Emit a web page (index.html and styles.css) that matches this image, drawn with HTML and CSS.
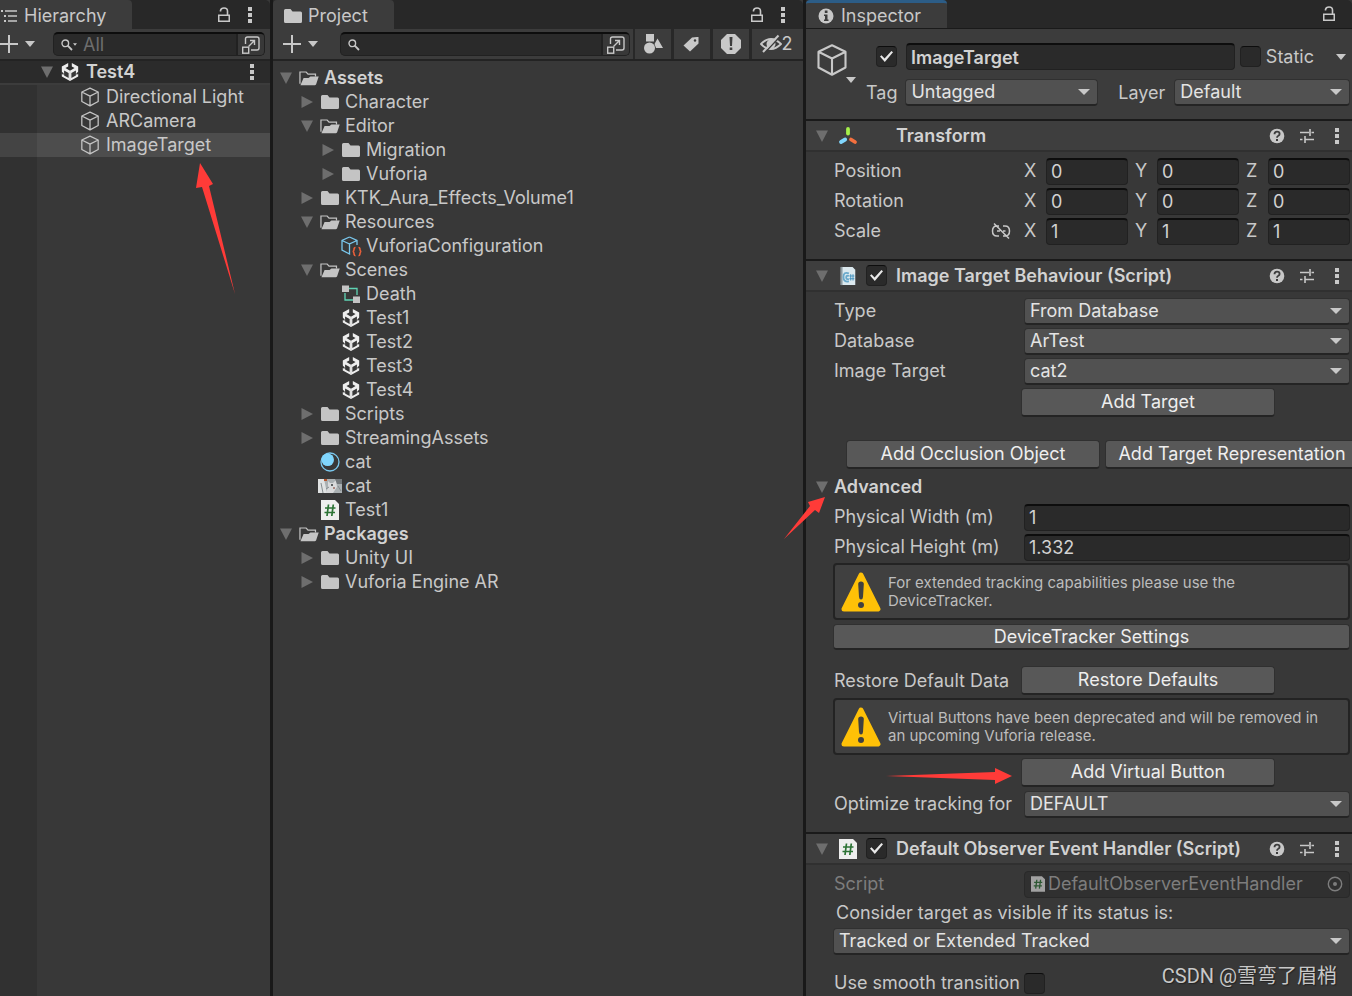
FILE: index.html
```
<!DOCTYPE html>
<html lang="en">
<head>
<meta charset="utf-8">
<title>Editor</title>
<link rel="stylesheet" href="styles.css">
</head>
<body>
<svg class="sprite" aria-hidden="true">
  <symbol id="lock" viewBox="0 0 14 16"><path d="M3.500 4.500V3.500Q4 1 7 1Q10.500 1 10.500 4V8" fill="none" stroke="currentColor" stroke-width="1.600"/><rect x="1.750" y="8.250" width="10.500" height="6" fill="none" stroke="currentColor" stroke-width="1.500"/></symbol>
  <symbol id="dots" viewBox="0 0 4 16"><path d="M0 0h4v4H0zM0 6h4v4H0zM0 12h4v4H0z" fill="currentColor"/></symbol>
  <symbol id="down" viewBox="0 0 12 12"><path d="M0 0.500H12L6 12Z" fill="currentColor"/></symbol>
  <symbol id="right" viewBox="0 0 12 12"><path d="M0.500 0L12 6L0.500 12Z" fill="currentColor"/></symbol>
  <symbol id="caret" viewBox="0 0 10 6"><path d="M0 0H10L5 6Z" fill="currentColor"/></symbol>
  <symbol id="plus" viewBox="0 0 18 18"><path d="M9 0V18M0 9H18" stroke="currentColor" stroke-width="2"/></symbol>
  <symbol id="search" viewBox="0 0 12 12"><circle cx="4.300" cy="4.300" r="3.300" fill="none" stroke="currentColor" stroke-width="1.400"/><path d="M6.700 6.700L11 11" stroke="currentColor" stroke-width="1.800"/></symbol>
  <symbol id="popout" viewBox="0 0 20 20"><path d="M4.500 9V4Q4.500 2 6.500 2H16Q18 2 18 4V13Q18 15 16 15H10" fill="none" stroke="currentColor" stroke-width="1.400"/><rect x="1.700" y="12.200" width="6" height="6" fill="none" stroke="currentColor" stroke-width="1.400"/><path d="M7.500 11.500L13 6M9 5.500H13.500V10" fill="none" stroke="currentColor" stroke-width="1.400"/></symbol>
  <symbol id="folder" viewBox="0 0 20 20"><path d="M1 4.500Q1 3 2.500 3H7.500L9.500 5.500H17.500Q19 5.500 19 7V15.500Q19 17 17.500 17H2.500Q1 17 1 15.500Z" fill="currentColor"/></symbol>
  <symbol id="open" viewBox="0 0 21 20"><path d="M1 16V3.700H7.500L9.500 6H17.300V8.500" fill="none" stroke="currentColor" stroke-width="1.300"/><path d="M1.500 17.500L4.800 10H10L12 8.300H20.700L18 16.500Q17.500 17.500 16.500 17.500Z" fill="currentColor"/></symbol>
  <symbol id="cube" viewBox="0 0 20 22"><path d="M10 1.200L19 5.500V16L10 20.800L1 16V5.500ZM1 5.500L10 10L19 5.500M10 10V20.800" fill="none" stroke="currentColor" stroke-width="1.400" stroke-linejoin="round"/></symbol>
  <symbol id="unity" viewBox="0 0 20 22"><path d="M8 1L1 5V16L10 21L19 16V5L12 1V5L15 6.700L10 9.500L5 6.700L8 5Z" fill="#eee"/><path d="M3.500 9.300L8.500 12V17.500L5.500 16L3.500 14.800ZM16.500 9.300L11.500 12V17.500L14.500 16L16.500 14.800Z" fill="#383838"/><path d="M0 10L3 12.500V14L0 13ZM20 10L17 12.500V14L20 13Z" fill="#383838"/><path d="M10 9.500V20" stroke="#ccc" stroke-width="1"/></symbol>
  <symbol id="script" viewBox="0 0 18 20"><path d="M0 0H14L18 4V20H0Z" fill="#eee"/><path d="M7.500 4.500L6 16M12.300 4.500L10.800 16M4 8H14.500M3.500 12.500H14" stroke="#2c7335" stroke-width="1.700"/></symbol>
  <symbol id="help" viewBox="0 0 16 16"><circle cx="8" cy="8" r="7.300" fill="currentColor"/><path d="M5.500 6.300Q5.500 3.700 8 3.700Q10.600 3.700 10.600 5.900Q10.600 7 9.300 7.800Q8 8.500 8 9.800" fill="none" stroke="#3c3c3c" stroke-width="1.800"/><rect x="7" y="11" width="2" height="2" fill="#3c3c3c"/></symbol>
  <symbol id="preset" viewBox="0 0 16 16"><path d="M1 4.500H10M12.500 4.500H15M11 1V8M1 11.500H3.500M6 11.500H15M6 8V15" fill="none" stroke="currentColor" stroke-width="1.600"/></symbol>
  <symbol id="warn" viewBox="0 0 40 40"><path d="M20 3L37 37H3Z" fill="#ffc107" stroke="#ffc107" stroke-width="5" stroke-linejoin="round"/><path d="M17.200 12Q17.200 9.500 20 9.500Q22.800 9.500 22.800 12L22 25Q21.800 27.500 20 27.500Q18.200 27.500 18 25Z" fill="#404040"/><circle cx="20" cy="33" r="3" fill="#404040"/></symbol>
</svg>

<main class="editor">
  <section class="panel" aria-label="Hierarchy">
    <header class="tabs">
      <div class="tab tab-first"><svg class="i18" viewBox="0 0 18 16"><path d="M5 3H17M8 8H17M8 13H17" stroke="currentColor" stroke-width="1.500"/><path d="M1 2h2v2H1zM4 7h2v2H4zM4 12h2v2H4z" fill="currentColor"/></svg><span>Hierarchy</span></div>
      <div class="tab-tools"><svg class="lock"><use href="#lock"/></svg><svg class="dots"><use href="#dots"/></svg></div>
    </header>
    <div class="toolbar bar-hierarchy">
      <button class="plain" aria-label="Create"><svg class="i18"><use href="#plus"/></svg><svg class="caret"><use href="#caret"/></svg></button>
      <div class="search"><svg class="glass"><use href="#search"/></svg><svg class="mini"><use href="#caret"/></svg><input type="text" placeholder="All" aria-label="Search hierarchy"><button aria-label="Open search"><svg class="i20"><use href="#popout"/></svg></button></div>
    </div>
    <div class="scene"><svg class="fold"><use href="#down"/></svg><svg class="icon"><use href="#unity"/></svg><b>Test4</b><svg class="dots"><use href="#dots"/></svg></div>
    <div class="objects">
      <div class="object"><svg class="icon"><use href="#cube"/></svg>Directional Light</div>
      <div class="object"><svg class="icon"><use href="#cube"/></svg>ARCamera</div>
      <div class="object selected"><svg class="icon"><use href="#cube"/></svg>ImageTarget</div>
    </div>
  </section>

  <section class="panel" aria-label="Project">
    <header class="tabs">
      <div class="tab"><svg class="i20"><use href="#folder"/></svg><span>Project</span></div>
      <div class="tab-tools"><svg class="lock"><use href="#lock"/></svg><svg class="dots"><use href="#dots"/></svg></div>
    </header>
    <div class="toolbar bar-project">
      <button class="plain" aria-label="Create"><svg class="i18"><use href="#plus"/></svg><svg class="caret"><use href="#caret"/></svg></button>
      <div class="search"><svg class="glass"><use href="#search"/></svg><input type="text" aria-label="Search project"><button aria-label="Open search"><svg class="i20"><use href="#popout"/></svg></button></div>
      <div class="filters">
        <button aria-label="Filter by type"><svg class="i20" viewBox="0 0 20 20"><path d="M3 0H11V7.500H3ZM14.500 4.500L20 14H13L11.500 10Z" fill="currentColor"/><circle cx="6.500" cy="14" r="5.500" fill="currentColor"/></svg></button>
        <button aria-label="Filter by label"><svg class="i20" viewBox="0 0 20 20"><path d="M10 3.500L15 3H16.500V9.500L8 17.500L1.500 11.500Z" fill="currentColor"/><circle cx="13" cy="6.500" r="1.200" fill="#3c3c3c"/></svg></button>
        <button aria-label="Filter by import log"><svg class="i20" viewBox="0 0 20 20"><path d="M6 0H14L20 6V14L14 20H6L0 14V6Z" fill="currentColor"/><path d="M8.500 3H11.500L11 12H9ZM8.700 13.500H11.300V16H8.700Z" fill="#3c3c3c"/></svg></button>
        <button class="hidden-count" aria-label="Hidden packages: 2"><svg class="eye" viewBox="0 0 22 20"><path d="M1 10Q11 0 21 10Q11 20 1 10Z" fill="none" stroke="currentColor" stroke-width="1.800"/><circle cx="11" cy="10" r="4.500" fill="currentColor"/><path d="M4.500 19L20 2.500" stroke="#3c3c3c" stroke-width="1.500"/><path d="M3 18L18.500 1.500" stroke="currentColor" stroke-width="2"/></svg>2</button>
      </div>
    </div>
    <div class="tree">
      <div class="node"><svg class="fold"><use href="#down"/></svg><svg class="icon"><use href="#open"/></svg><b>Assets</b></div>
      <div class="node l1"><svg class="fold"><use href="#right"/></svg><svg class="icon"><use href="#folder"/></svg>Character</div>
      <div class="node l1"><svg class="fold"><use href="#down"/></svg><svg class="icon"><use href="#open"/></svg>Editor</div>
      <div class="node l2"><svg class="fold"><use href="#right"/></svg><svg class="icon"><use href="#folder"/></svg>Migration</div>
      <div class="node l2"><svg class="fold"><use href="#right"/></svg><svg class="icon"><use href="#folder"/></svg>Vuforia</div>
      <div class="node l1"><svg class="fold"><use href="#right"/></svg><svg class="icon"><use href="#folder"/></svg>KTK_Aura_Effects_Volume1</div>
      <div class="node l1"><svg class="fold"><use href="#down"/></svg><svg class="icon"><use href="#open"/></svg>Resources</div>
      <div class="node l2"><i class="fold"></i><svg class="icon" viewBox="0 0 20 20"><path d="M8.500 1L16 4.500V9M8.500 1L1 4.500V14L8.500 18V8L16 4.500M1 4.500L8.500 8" fill="none" stroke="#7ac8ee" stroke-width="1.300"/><path d="M14.500 11.500Q13 11.500 13 13.500Q13 15.300 11.700 15.500Q13 15.700 13 17.500Q13 19.700 14.500 19.700M17.500 11.500Q19 11.500 19 13.500Q19 15.300 20.300 15.500Q19 15.700 19 17.500Q19 19.700 17.500 19.700" fill="none" stroke="#f4623a" stroke-width="1.500"/></svg>VuforiaConfiguration</div>
      <div class="node l1"><svg class="fold"><use href="#down"/></svg><svg class="icon"><use href="#open"/></svg>Scenes</div>
      <div class="node l2"><i class="fold"></i><svg class="icon" viewBox="0 0 20 20"><path d="M8 4.500H16V11M4 9V16H12" fill="none" stroke="#5fd4b4" stroke-width="1.300"/><path d="M1 1.500H8V8H1ZM12 12.500H19V19H12Z" fill="#c4c4c4"/></svg>Death</div>
      <div class="node l2"><i class="fold"></i><svg class="icon"><use href="#unity"/></svg>Test1</div>
      <div class="node l2"><i class="fold"></i><svg class="icon"><use href="#unity"/></svg>Test2</div>
      <div class="node l2"><i class="fold"></i><svg class="icon"><use href="#unity"/></svg>Test3</div>
      <div class="node l2"><i class="fold"></i><svg class="icon"><use href="#unity"/></svg>Test4</div>
      <div class="node l1"><svg class="fold"><use href="#right"/></svg><svg class="icon"><use href="#folder"/></svg>Scripts</div>
      <div class="node l1"><svg class="fold"><use href="#right"/></svg><svg class="icon"><use href="#folder"/></svg>StreamingAssets</div>
      <div class="node l1"><i class="fold"></i><svg class="icon" viewBox="0 0 20 20"><circle cx="10" cy="10" r="9" fill="none" stroke="#7ac8ee" stroke-width="1.300"/><circle cx="7.700" cy="7.700" r="6.300" fill="#80d6fd"/></svg>cat</div>
      <div class="node l1"><i class="fold"></i><svg class="icon photo" viewBox="0 0 24 14"><path d="M0 0H24V14H0Z" fill="#aab0b2"/><path d="M0 0H6L9 14H0Z" fill="#e0e2e2"/><path d="M6 0H9V2H6Z" fill="#b5542c"/><path d="M10 2L12 4H15L18 1L19 8L15 14H8L10 8Z" fill="#d9dadb"/><path d="M17 0H24V5H19Z" fill="#73787b"/><path d="M3 4L5 14M8 10L11 8M20 7L23 12" stroke="#858c8f"/><circle cx="14" cy="6" r="1" fill="#33383a"/><circle cx="16" cy="9" r="1" fill="#9b6b61"/></svg>cat</div>
      <div class="node l1"><i class="fold"></i><svg class="icon"><use href="#script"/></svg>Test1</div>
      <div class="node"><svg class="fold"><use href="#down"/></svg><svg class="icon"><use href="#open"/></svg><b>Packages</b></div>
      <div class="node l1"><svg class="fold"><use href="#right"/></svg><svg class="icon"><use href="#folder"/></svg>Unity UI</div>
      <div class="node l1"><svg class="fold"><use href="#right"/></svg><svg class="icon"><use href="#folder"/></svg>Vuforia Engine AR</div>
    </div>
  </section>

  <section class="panel inspector" aria-label="Inspector">
    <header class="tabs">
      <div class="tab active"><svg class="info" viewBox="0 0 16 16"><circle cx="8" cy="8" r="7.500" fill="currentColor"/><path d="M6.800 2.500H9.500V5H6.800ZM6 6.500H9.500V11.500H10.500V13H6V11.500H7V8H6Z" fill="#3c3c3c"/></svg><span>Inspector</span></div>
      <div class="tab-tools"><svg class="lock"><use href="#lock"/></svg></div>
    </header>

    <div class="summary">
      <div class="kind"><svg class="big-cube"><use href="#cube"/></svg><svg class="caret"><use href="#caret"/></svg></div>
      <div class="summary-rows">
        <div class="name-row"><input type="checkbox" checked aria-label="Active"><input class="field name" type="text" value="ImageTarget" aria-label="Name"><input type="checkbox" id="static"><label for="static">Static</label><svg class="caret"><use href="#caret"/></svg></div>
        <div class="tag-row"><label for="tag">Tag</label><span class="select tag"><select id="tag"><option>Untagged</option></select></span><label for="layer" class="layer-label">Layer</label><span class="select layer"><select id="layer"><option>Default</option></select></span></div>
      </div>
    </div>

    <div class="component">
      <div class="component-head"><svg class="fold"><use href="#down"/></svg><svg class="type" viewBox="0 0 20 20"><g stroke-width="3.800" stroke-linecap="round"><path d="M10 3V7.500" stroke="#a5f04a"/><path d="M7.200 13.500L3 16" stroke="#80d6fd"/><path d="M13 13.500L17 16" stroke="#f4703e"/></g></svg><span class="no-check"></span><h2>Transform</h2><svg class="act"><use href="#help"/></svg><svg class="act"><use href="#preset"/></svg><svg class="dots"><use href="#dots"/></svg></div>
      <div class="row"><span class="label">Position</span><div class="axes"><label>X<input class="field" type="text" value="0"></label><label>Y<input class="field" type="text" value="0"></label><label>Z<input class="field" type="text" value="0"></label></div></div>
      <div class="row"><span class="label">Rotation</span><div class="axes"><label>X<input class="field" type="text" value="0"></label><label>Y<input class="field" type="text" value="0"></label><label>Z<input class="field" type="text" value="0"></label></div></div>
      <div class="row"><span class="label">Scale<svg class="link" viewBox="0 0 20 18"><path d="M8 4H6Q1.500 4 1.500 9Q1.500 14 6 14H8M12 4H14Q18.500 4 18.500 9Q18.500 14 14 14H12M6 9H9M12 9H14.500M3 1.500L18 16.500" fill="none" stroke="currentColor" stroke-width="1.500"/></svg></span><div class="axes"><label>X<input class="field" type="text" value="1"></label><label>Y<input class="field" type="text" value="1"></label><label>Z<input class="field" type="text" value="1"></label></div></div>
    </div>

    <div class="component">
      <div class="component-head"><svg class="fold"><use href="#down"/></svg><svg class="type" viewBox="0 0 20 22"><path d="M2 1H15L18 4V21H2Z" fill="#dce9ef"/><path d="M2 1H4V21H2Z" fill="#8d9ba1"/><path d="M11 8Q5 6 5 12Q5 18 11 17M11 11Q8 10 8 12.500Q8 15 11 14.500" fill="none" stroke="#6aa9cb" stroke-width="2"/><path d="M13 9V16M15.500 9V16M11.500 11H17M11.500 14H17" stroke="#3f8fbd"/></svg><input type="checkbox" checked aria-label="Enable Image Target Behaviour"><h2>Image Target Behaviour (Script)</h2><svg class="act"><use href="#help"/></svg><svg class="act"><use href="#preset"/></svg><svg class="dots"><use href="#dots"/></svg></div>
      <div class="row"><label class="label" for="type">Type</label><span class="select"><select id="type"><option>From Database</option></select></span></div>
      <div class="row"><label class="label" for="db">Database</label><span class="select"><select id="db"><option>ArTest</option></select></span></div>
      <div class="row"><label class="label" for="target">Image Target</label><span class="select"><select id="target"><option>cat2</option></select></span></div>
      <div class="row-button"><span class="label"></span><button class="btn">Add Target</button></div>
      <div class="row-pair"><button class="btn">Add Occlusion Object</button><button class="btn">Add Target Representation</button></div>
      <div class="foldout"><svg class="fold"><use href="#down"/></svg><b>Advanced</b></div>
      <div class="row"><label class="label" for="pw">Physical Width (m)</label><input class="field" id="pw" type="text" value="1"></div>
      <div class="row"><label class="label" for="ph">Physical Height (m)</label><input class="field" id="ph" type="text" value="1.332"></div>
      <div class="note"><svg class="warn"><use href="#warn"/></svg><p>For extended tracking capabilities please use the DeviceTracker.</p></div>
      <button class="btn wide">DeviceTracker Settings</button>
      <div class="row-button"><span class="label">Restore Default Data</span><button class="btn">Restore Defaults</button></div>
      <div class="note"><svg class="warn"><use href="#warn"/></svg><p>Virtual Buttons have been deprecated and will be removed in an upcoming Vuforia release.</p></div>
      <div class="row-button"><span class="label"></span><button class="btn">Add Virtual Button</button></div>
      <div class="row"><label class="label" for="opt">Optimize tracking for</label><span class="select"><select id="opt"><option>DEFAULT</option></select></span></div>
    </div>

    <div class="component">
      <div class="component-head"><svg class="fold"><use href="#down"/></svg><svg class="type"><use href="#script"/></svg><input type="checkbox" checked aria-label="Enable Default Observer Event Handler"><h2>Default Observer Event Handler (Script)</h2><svg class="act"><use href="#help"/></svg><svg class="act"><use href="#preset"/></svg><svg class="dots"><use href="#dots"/></svg></div>
      <div class="row disabled"><span class="label">Script</span><div class="object-field"><svg class="small"><use href="#script"/></svg><span>DefaultObserverEventHandler</span><svg class="act" viewBox="0 0 16 16"><circle cx="8" cy="8" r="6.700" fill="none" stroke="currentColor" stroke-width="1.400"/><circle cx="8" cy="8" r="2" fill="currentColor"/></svg></div></div>
      <label class="line" for="status">Consider target as visible if its status is:</label>
      <div class="row short"><span class="select"><select id="status"><option>Tracked or Extended Tracked</option></select></span></div>
      <div class="row last"><label class="label" for="smooth">Use smooth transition</label><input type="checkbox" id="smooth"></div>
    </div>
  </section>
</main>

<svg class="marks" viewBox="0 0 1352 996" aria-hidden="true"><g fill="#ff3b38"><path d="M200 163L213 184L209 186L235 294L202 187L196 188Z"/><path d="M825 497L819 513L815 510L784 539L810 506L808 502Z"/><path d="M1012 776L995 784V780L886 776L995 772V768Z"/></g></svg>
<div class="watermark">CSDN @雪弯了眉梢</div>
</body>
</html>
```
FILE: styles.css
```
* { box-sizing: border-box; }
body { margin: 0; height: 100vh; overflow: hidden; position: relative; background: #191919; color: #c8c8c8; font: 18px/24px Inter, "Noto Sans", sans-serif; }
input, select, button { font: inherit; color: inherit; margin: 0; }
b, h2 { font-weight: 600; color: #d2d2d2; }
svg { flex: none; display: block; }
.sprite { position: absolute; width: 0; height: 0; }

.editor { height: 100%; display: grid; grid-template-columns: 270fr 530fr 546fr; gap: 3px; }
.panel { background: #383838; min-width: 0; overflow: hidden; display: flex; flex-direction: column; }

.tabs { flex: none; height: 29px; display: flex; justify-content: space-between; background: #282828; border-radius: 0 5px 0 0; }
.tab { display: flex; align-items: center; gap: 5px; padding: 2px 26px 0 10px; background: #3c3c3c; border-radius: 4px 4px 0 0; }
.tab-first { padding-left: 0; gap: 6px; border-top-left-radius: 0; }
.tab.active { border-top: 3px solid #2c5d87; padding: 0 26px 0 12px; gap: 7px; }
.tab-tools { display: flex; align-items: center; gap: 17px; padding-right: 18px; }

.i18 { width: 18px; height: 18px; }
.i20 { width: 20px; height: 20px; }
.info { width: 16px; height: 16px; }
.lock { width: 14px; height: 16px; }
.dots { width: 4px; height: 16px; }
.caret { width: 10px; height: 6px; }
.glass { width: 12px; height: 12px; }
.mini { width: 4px; height: 3px; }
.eye { width: 22px; height: 20px; }
.fold { width: 12px; height: 12px; flex: none; color: #6e6e6e; }
.icon { width: 20px; height: 20px; color: #c4c4c4; overflow: visible; }

.toolbar { flex: none; height: 32px; display: flex; align-items: center; background: #3c3c3c; border-bottom: 2px solid #232323; }
.plain { border: 0; padding: 0; background: none; display: flex; align-items: center; gap: 7px; }
.bar-hierarchy { padding-right: 5px; gap: 18px; }
.bar-project { padding-left: 10px; gap: 22px; }
.search { flex: 1; min-width: 0; height: 24px; display: flex; align-items: center; background: #2a2a2a; border: 1px solid #212121; border-top: 2px solid #0d0d0d; border-radius: 5px; padding-left: 7px; overflow: hidden; }
.search input { flex: 1; min-width: 0; border: 0; padding: 0 6px; background: none; }
.search input::placeholder { color: #6e6e6e; opacity: 1; }
.search button { align-self: stretch; width: 28px; border: 0; border-left: 2px solid #212121; padding: 0 3px; background: #383838; display: flex; align-items: center; justify-content: center; }
.filters { align-self: stretch; display: flex; gap: 3px; margin-left: -19px; border-left: 2px solid #282828; background: #282828; }
.filters button { width: 36px; border: 0; padding: 0; background: #3c3c3c; display: flex; align-items: center; justify-content: center; }
.filters .hidden-count { width: 51px; padding-right: 3px; }

.scene { flex: none; height: 24px; display: flex; align-items: center; padding: 0 16px 0 41px; background: #2b2b2b; border-bottom: 2px solid #3c3c3c; }
.scene .icon { margin: 0 6px 0 7px; }
.scene .dots { margin-left: auto; }
.objects { flex: 1; background: linear-gradient(90deg, #313131 37px, #383838 37px); }
.object { height: 24px; display: flex; align-items: center; gap: 6px; padding-left: 80px; white-space: nowrap; }
.selected { background: linear-gradient(90deg, #444 37px, #4d4d4d 37px); }

.tree { padding-top: 5px; }
.node { height: 24px; display: flex; align-items: center; padding-left: 7px; white-space: nowrap; }
.node .icon { margin: 0 5px 0 7px; }
.node .photo { width: 24px; margin: 0 3px 0 5px; }
.l1 { padding-left: 28px; }
.l2 { padding-left: 49px; }

.inspector .tabs { border-bottom: 1px solid #1a1a1a; }
.inspector .tab-tools { padding-right: 16px; }
.summary { flex: none; display: flex; padding: 14px 2px 13px 11px; background: #3c3c3c; }
.kind { width: 40px; height: 40px; display: flex; flex-wrap: wrap; align-content: flex-start; justify-content: flex-end; padding-right: 1px; }
.big-cube { width: 30px; height: 34px; margin-right: 9px; }
.summary-rows { flex: 1; min-width: 0; padding-left: 9px; display: flex; flex-direction: column; gap: 9px; }
.name-row, .tag-row { display: flex; align-items: center; }
.name-row { gap: 5px; padding: 0 4px 0 10px; }
.name-row .caret { margin-left: 17px; }
.name-row .name { flex: 1; margin-left: 4px; font-weight: 600; }
.tag-row .tag { flex: 192 1 0; margin-left: 8px; }
.tag-row .layer { flex: 175 1 0; margin-left: 9px; }
.layer-label { margin-left: 20px; }

.field { width: 100%; min-width: 0; height: 27px; padding: 0 4px; background: #2a2a2a; border: 1px solid #212121; border-top: 2px solid #0d0d0d; border-radius: 4px; color: #d2d2d2; }
.select { flex: 1; min-width: 0; display: block; position: relative; }
.select::after { content: ""; position: absolute; right: 8px; top: 10px; border: 6px solid transparent; border-top: 6px solid #c8c8c8; border-bottom: 0; pointer-events: none; }
.select select { display: block; width: 100%; height: 27px; appearance: none; background: #515151; border: 1px solid #303030; border-bottom: 2px solid #242424; border-radius: 4px; padding: 0 20px 0 5px; color: #e4e4e4; }
input[type="checkbox"] { appearance: none; flex: none; width: 21px; height: 21px; background: #2a2a2a; border: 1px solid #212121; border-top-color: #0d0d0d; border-radius: 4px; display: grid; place-items: center; }
input[type="checkbox"]:checked::before { content: ""; width: 13px; height: 11px; background: #e8e8e8; clip-path: polygon(0 50%, 12% 38%, 35% 68%, 88% 0, 100% 12%, 37% 100%); }

.component { flex: none; padding-bottom: 13px; border-top: 2px solid #1a1a1a; }
.component-head { height: 31px; display: flex; align-items: center; padding: 0 13px 0 10px; background: #3e3e3e; border-bottom: 2px solid #303030; margin-bottom: 4px; }
.component-head h2 { flex: 1; min-width: 0; margin: 0 9px; font-size: 18px; white-space: nowrap; overflow: hidden; }
.type { width: 20px; height: 20px; margin: 0 8px 0 10px; }
.no-check { width: 21px; flex: none; }
.act { width: 16px; height: 16px; }
.act + .act { margin: 0 20px 0 14px; }

.row, .row-button { display: flex; align-items: center; padding: 0 2px 0 28px; }
.row { height: 30px; }
.label { flex: 0 0 190px; display: flex; align-items: center; white-space: nowrap; }
.link { width: 20px; height: 18px; margin-left: auto; margin-right: 13px; }
.axes { flex: 1; min-width: 0; display: flex; gap: 7px; }
.axes label { flex: 1; min-width: 0; display: flex; align-items: center; justify-content: space-between; gap: 6px; }
.axes .field { width: 82px; flex: 0 1 82px; }
.btn { flex: none; width: 254px; height: 29px; padding: 0; background: #585858; border: 1px solid #303030; border-bottom: 2px solid #242424; border-radius: 4px; color: #eee; white-space: nowrap; }
.row-button .label { flex-basis: 187px; }
.row-button { height: 33px; }
.row-pair { display: flex; gap: 5px; padding: 21px 0 3px 40px; }
.foldout { height: 30px; display: flex; align-items: center; gap: 6px; padding-left: 10px; }
.note { min-height: 57px; margin: 1px 2px 1px 27px; padding: 0 11px 0 6px; display: flex; align-items: center; gap: 7px; background: #404040; border: 2px solid #232323; border-radius: 4px; font-size: 15px; line-height: 18px; color: #bdbdbd; }
.note p { margin: 0; }
.warn { width: 40px; height: 40px; }
.btn.wide { display: block; width: calc(100% - 29px); height: 26px; margin: 4px 2px 14px 27px; }
.disabled { color: #7d7d7d; }
.object-field { flex: 1; min-width: 0; height: 27px; display: flex; align-items: center; padding: 0 6px; gap: 3px; background: #303030; border: 1px solid #292929; border-radius: 4px; }
.object-field span { flex: 1; min-width: 0; overflow: hidden; }
.small { width: 14px; height: 16px; opacity: 0.6; }
.line { display: block; height: 28px; line-height: 28px; padding-left: 30px; }
.short { padding-left: 27px; height: 28px; }
.last { margin-top: 13px; }

.marks { position: absolute; left: 0; top: 0; width: 1352px; height: 996px; pointer-events: none; }
.watermark { position: absolute; right: 15px; bottom: 6px; font: 20px/28px Roboto, "Noto Sans CJK SC", sans-serif; color: #c8c8c8; text-shadow: 1px 1px 1px #222; }
```
